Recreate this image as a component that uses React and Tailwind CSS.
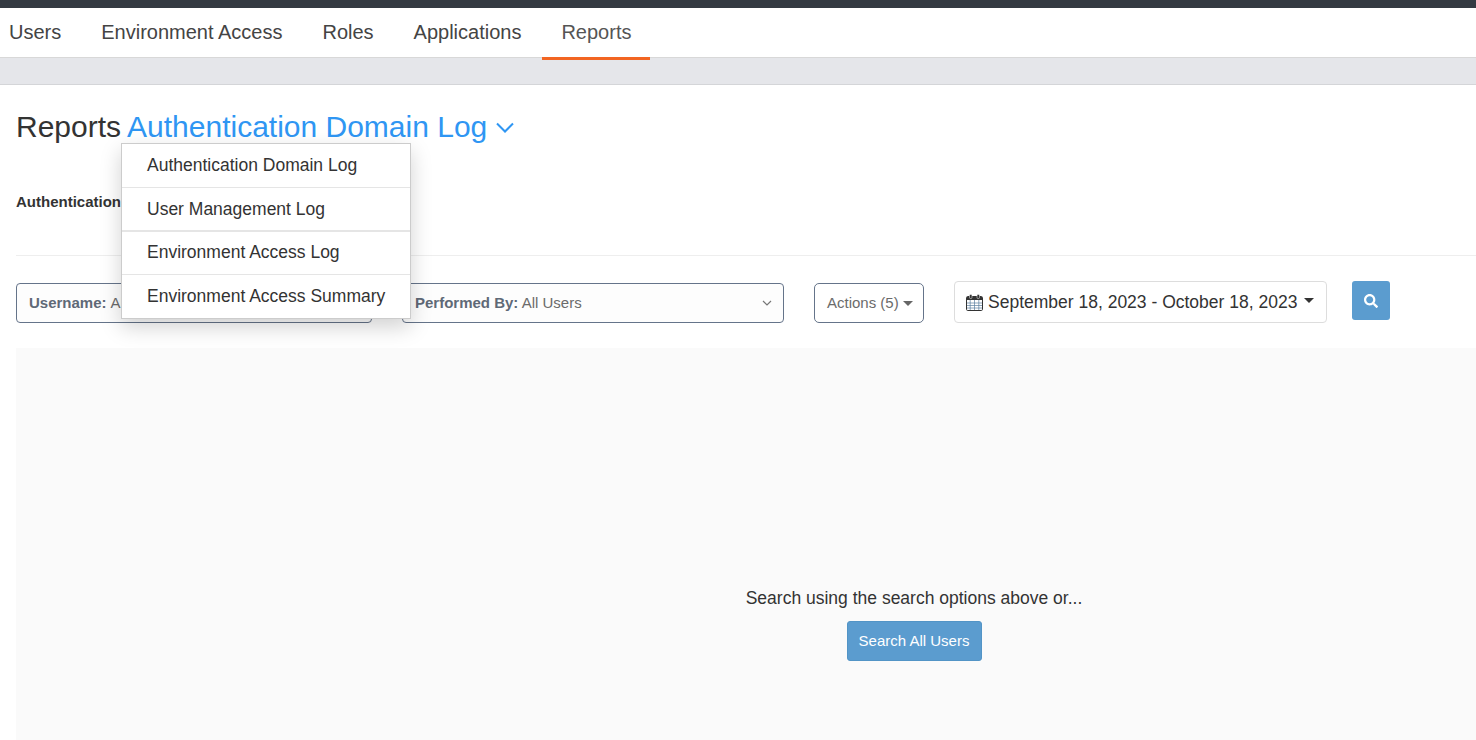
import React from "react";
import { FaSearch } from "react-icons/fa";

const font = "font-['Liberation_Sans',Arial,sans-serif]";

function Calendar() {
  return (
    <svg width="17" height="17" viewBox="0 0 17 17" className="shrink-0">
      <rect x="0.5" y="2.5" width="16" height="14" rx="1.2" fill="#fff" stroke="#333" />
      <rect x="1" y="3" width="15" height="3" fill="#333" />
      <rect x="3.5" y="0.5" width="2.5" height="4" rx="1" fill="#333" stroke="#fff" strokeWidth="0.5" />
      <rect x="11" y="0.5" width="2.5" height="4" rx="1" fill="#333" stroke="#fff" strokeWidth="0.5" />
      <path d="M1 9h15M1 11.5h15M1 14h15M4.2 6v10M8.5 6v10M12.8 6v10" stroke="#5a7fa0" strokeWidth="0.7" fill="none" />
    </svg>
  );
}

function Caret({ color = "border-t-[#555]", w = "border-x-[5px] border-t-[5px]" }) {
  return <span className={`block h-0 w-0 border-x-transparent ${w} ${color}`} />;
}

const tabs = ["Users", "Environment Access", "Roles", "Applications", "Reports"];
const menu = [
  ["Authentication Domain Log", "h-[44px] border-b"],
  ["User Management Log", "h-[44px] border-b-2"],
  ["Environment Access Log", "h-[43px] border-b pb-px"],
  ["Environment Access Summary", "h-[43px]"],
];

export default function App() {
  return (
    <div className={`${font} relative h-[740px] w-[1476px] overflow-hidden bg-white text-[#333]`}>
      <div className="h-2 bg-[#343a42]" />
      <nav className="flex h-[50px] items-center border-b border-[#d8d8d8] text-[20px] text-[#444]">
        {tabs.map((t, i) => (
          <a
            key={t}
            className={`relative flex h-full items-center px-5 pb-[2px] ${i === 0 ? "-ml-[11px]" : ""} ${i === 4 ? "text-[#555]" : ""}`}
          >
            {t}
            {i === 4 && <span className="absolute inset-x-px -bottom-[3px] h-[3px] bg-[#f26522]" />}
          </a>
        ))}
      </nav>
      <div className="h-[27px] border-b border-[#d4d5d8] bg-[#e5e6ea]" />

      <div className="pl-4">
        <h1 className="flex h-[58px] items-center gap-[6px] pt-[26px] text-[30px] leading-none text-[#333]">
          <span>Reports</span>
          <span className="text-[#2f96f3]">Authentication Domain Log</span>
          <svg width="20" height="18" viewBox="0 0 20 18" className="ml-[2px]" fill="none" stroke="#2f96f3" strokeWidth="2">
            <path d="M2 5.5 10 13.5l8-8" />
          </svg>
        </h1>
        <p className="mt-[51px] h-[16px] text-[15px] font-bold leading-4 text-[#333]">Authentication Domain Log</p>
        <div className="mt-[45px] border-t border-[#eee]" />

        <div className="mt-[25px] flex h-[42px] items-start">
          <div className="mt-[2px] flex h-10 w-[356px] items-center rounded border border-[#65748a] bg-[#fdfdfd] px-3 text-[15px] text-[#6b6b6b]">
            <b className="mr-1 text-[#5f6977]">Username:</b> All Users
          </div>
          <div className="ml-[30px] mt-[2px] flex h-10 w-[382px] items-center justify-between rounded border border-[#65748a] bg-[#fdfdfd] pl-3 pr-[11px] text-[15px] text-[#6b6b6b]">
            <span>
              <b className="text-[#5f6977]">Performed By:</b> All Users
            </span>
            <svg width="10" height="6" viewBox="0 0 10 6" fill="none" stroke="#777" strokeWidth="1.2">
              <path d="m1 1 4 4 4-4" />
            </svg>
          </div>
          <div className="ml-[30px] mt-[2px] flex h-10 w-[110px] items-center gap-1 rounded-[5px] border border-[#65748a] bg-white pl-3 text-[15px] text-[#6b6b6b]">
            Actions (5) <Caret color="border-t-[#666]" />
          </div>
          <div className="ml-[30px] flex h-[42px] w-[373px] items-center gap-[5px] rounded border border-[#ddd] bg-white pl-[11px] text-[17.5px] text-[#333]">
            <Calendar />
            <span>September 18, 2023 - October 18, 2023</span>
            <span className="mb-[4px] ml-[2px]"><Caret color="border-t-[#333]" /></span>
          </div>
          <button className="ml-[25px] flex h-[39px] w-[38px] items-center justify-center rounded-[3px] bg-[#5b9ccf] text-white">
            <FaSearch size={14} />
          </button>
        </div>

        <div className="mt-[25px] flex h-[393px] w-[1796px] flex-col items-center bg-[#fafafa] pt-[239px]">
          <p className="text-[17.5px] leading-[22px] text-[#333]">Search using the search options above or...</p>
          <button className="mt-[12px] flex h-10 w-[135px] items-center justify-center rounded-[3px] border border-[#5294c6] bg-[#5b9ccf] text-[15px] text-white">
            Search All Users
          </button>
        </div>
      </div>

      <ul className="absolute left-[121px] top-[143px] w-[290px] border border-[#ccc] bg-white text-[17.5px] text-[#333] shadow-[0_8px_20px_rgba(0,0,0,0.18)]">
        {menu.map(([m, c]) => (
          <li key={m} className={`flex items-center border-[#e5e5e5] pl-[25px] ${c}`}>
            {m}
          </li>
        ))}
      </ul>
    </div>
  );
}
